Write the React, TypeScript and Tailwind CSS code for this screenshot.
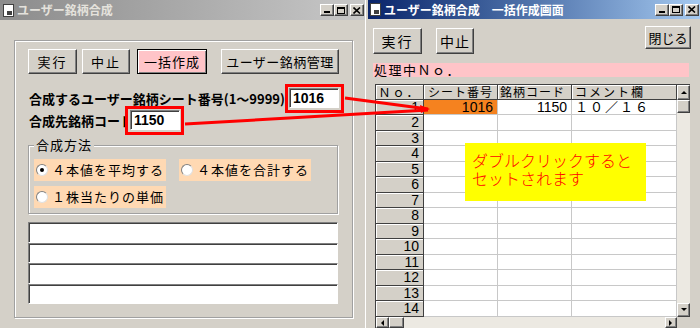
import clsx from 'clsx';
import type { ReactNode } from 'react';

const raised =
    'bg-[#d4d0c8] border border-t-white border-l-white border-r-[#404040] border-b-[#404040] shadow-[inset_-1px_-1px_0_#808080]';
const sunken =
    'bg-white border border-t-[#808080] border-l-[#808080] border-r-white border-b-white shadow-[inset_1px_1px_0_#404040]';

const Btn = ({ children, className }: { children: ReactNode; className?: string }) => (
    <div className={clsx('flex items-center justify-center text-[13px] leading-none whitespace-nowrap', raised, className)}>{children}</div>
);

const WinIcon = () => (
    <div className="w-[11px] h-[13px] bg-white border border-[#404040] relative">
        <div className="absolute bottom-[1px] right-[1px] w-[5px] h-[4px] bg-[#404040]" />
    </div>
);

const TitleButtons = () => (
    <div className="flex items-center ml-auto mr-[1px]">
        <div className={clsx('w-[14px] h-[12px] flex items-end justify-center pb-[2px]', raised)}>
            <div className="w-[6px] h-[2px] bg-black" />
        </div>
        <div className={clsx('w-[14px] h-[12px] flex items-center justify-center', raised)}>
            <div className="w-[8px] h-[7px] border border-black border-t-2" />
        </div>
        <div className={clsx('w-[14px] h-[12px] ml-[2px] flex items-center justify-center', raised)}>
            <svg width="8" height="7" viewBox="0 0 8 7">
                <path d="M0.5 0.5 L7 6.5 M7 0.5 L0.5 6.5" stroke="black" strokeWidth="1.6" />
            </svg>
        </div>
    </div>
);

const Radio = ({ checked, label }: { checked?: boolean; label: string }) => (
    <div className="bg-[#ffd9b3] h-[22px] flex items-center pl-[2px]">
        <div className="w-[12px] h-[12px] rounded-full bg-white border border-t-[#808080] border-l-[#808080] border-r-[#e0e0e0] border-b-[#e0e0e0] flex items-center justify-center">
            {checked && <div className="w-[4px] h-[4px] rounded-full bg-black" />}
        </div>
        <span className="ml-[4px] text-[13px] tracking-[1px] whitespace-nowrap">{label}</span>
    </div>
);

const Arrow = ({ dir }: { dir: 'up' | 'down' | 'left' | 'right' }) => {
    const d = {
        up: 'M1 5 L4 2 L7 5 Z',
        down: 'M1 2 L4 5 L7 2 Z',
        left: 'M5 1 L2 4 L5 7 Z',
        right: 'M2 1 L5 4 L2 7 Z',
    }[dir];
    return (
        <svg width="8" height="8" viewBox="0 0 8 8">
            <path d={d} fill="black" />
        </svg>
    );
};

const rows = Array.from({ length: 14 }, (_, i) => i + 1);
const numFont = "font-['Liberation_Sans_Narrow','Liberation_Sans',sans-serif]";
const headCell = 'bg-[#d4d0c8] border-r border-b border-[#404040] shadow-[inset_1px_1px_0_#fff] whitespace-nowrap';

const App = () => {
    return (
        <div className="w-[700px] h-[328px] overflow-hidden relative bg-[#d4d0c8] flex font-['Noto_Sans_CJK_JP',sans-serif] text-black">
            {/* left window */}
            <div className="w-[365px] h-full flex flex-col">
                <div className="h-[20px] flex items-center pl-[3px] bg-linear-to-r from-[#8c8c8c] to-[#c8c8c8]">
                    <WinIcon />
                    <span className="ml-[3px] text-[12px] font-bold text-[#e4e2dc] leading-none">ユーザー銘柄合成</span>
                    <TitleButtons />
                </div>
                <div className="pl-[14px] pt-[20px]">
                    <div className="w-[339px] h-[278px] border border-[#a0a0a0] shadow-[1px_1px_0_#fff,inset_1px_1px_0_#fff] pl-[13px] pt-[8px]">
                        <div className="flex h-[25px]">
                            <Btn className="w-[49px] tracking-[2px]">実行</Btn>
                            <Btn className="w-[48px] ml-[5px] tracking-[2px]">中止</Btn>
                            <div className="w-[70px] ml-[7px] flex items-center justify-center text-[13px] tracking-[1px] bg-[#ffc4c8] border border-black shadow-[inset_1px_1px_0_#fff,inset_-1px_-1px_0_#808080]">
                                一括作成
                            </div>
                            <Btn className="w-[118px] ml-[14px] tracking-[0.5px]">ユーザー銘柄管理</Btn>
                        </div>

                        <div className="flex mt-[10px] relative z-[1]">
                            <div className="w-[257px] h-[29px] leading-[29px] pl-[1px] text-[13px] font-bold whitespace-nowrap">
                                合成するユーザー銘柄シート番号(1～9999)
                            </div>
                            <div className="relative w-[59px] h-[29px] border-[3px] border-[#ff0000] p-[1px]">
                                <div className={clsx('w-[50px] h-[20px] pl-[3px] text-[14px] font-bold leading-[18px]', numFont, sunken)}>1016</div>
                            </div>
                        </div>

                        <div className="flex -mt-[7px] relative">
                            <div className="w-[97px] h-[29px] leading-[29px] pl-[1px] text-[13px] font-bold whitespace-nowrap">
                                合成先銘柄コード
                            </div>
                            <div className="relative w-[59px] h-[29px] border-[3px] border-[#ff0000] bg-[#d4d0c8] p-[1px] pl-[2px]">
                                <div className={clsx('w-[50px] h-[20px] pl-[3px] text-[14px] font-bold leading-[18px]', numFont, sunken)}>1150</div>
                            </div>
                        </div>

                        <div className="mt-[10px] w-[310px] h-[69px] relative border border-[#a0a0a0] shadow-[1px_1px_0_#fff,inset_1px_1px_0_#fff] pl-[5px] pt-[13px]">
                            <span className="absolute -top-[9px] left-[5px] bg-[#d4d0c8] px-[2px] text-[13px] tracking-[1px] leading-[16px]">
                                合成方法
                            </span>
                            <div className="grid grid-cols-[132px_132px] gap-x-[13px] gap-y-[5px]">
                                <Radio checked label="４本値を平均する" />
                                <Radio label="４本値を合計する" />
                                <Radio label="１株当たりの単価" />
                            </div>
                        </div>

                        <div className="mt-[8px] w-[310px] flex flex-col">
                            <div className={clsx('h-[21px]', sunken)} />
                            <div className={clsx('h-[20px]', sunken)} />
                            <div className={clsx('h-[21px]', sunken)} />
                            <div className={clsx('h-[20px]', sunken)} />
                        </div>
                    </div>
                </div>
            </div>

            {/* right window */}
            <div className="w-[335px] h-full flex flex-col border-l border-white">
                <div className="ml-[2px] h-[20px] flex items-center pl-[2px] bg-linear-to-r from-[#0a246a] to-[#a6caf0]">
                    <WinIcon />
                    <span className="ml-[3px] text-[12px] font-bold text-white leading-none whitespace-pre">ユーザー銘柄合成　一括作成画面</span>
                    <TitleButtons />
                </div>

                <div className="flex items-start">
                    <Btn className="w-[49px] h-[26px] mt-[9px] ml-[7px] text-[14px] tracking-[2px]">実行</Btn>
                    <Btn className="w-[38px] h-[26px] mt-[9px] ml-[14px] text-[14px] tracking-[1px]">中止</Btn>
                    <Btn className="w-[46px] h-[23px] mt-[7px] ml-auto mr-[9px] text-[13px]">閉じる</Btn>
                </div>

                <div className="ml-[7px] mt-[9px] w-[316px] h-[14px] bg-[#ffc4c8] text-[13px] leading-[14px] tracking-[1.5px] pl-[1px] whitespace-nowrap">
                    処理中Ｎｏ．
                </div>

                <div className="ml-[9px] mt-[7px] w-[315px] border-l border-t border-[#404040]">
                    <div className="flex">
                        <div className="w-[301px] flex flex-col">
                            <div className="flex h-[15px] text-[12px] leading-[14px]">
                                <div className={clsx('w-[48px] text-center tracking-[2px]', headCell)}>Ｎｏ．</div>
                                <div className={clsx('w-[74px] pl-[4px] tracking-[1px]', headCell)}>シート番号</div>
                                <div className={clsx('w-[74px] pl-[2px] tracking-[1px]', headCell)}>銘柄コード</div>
                                <div className={clsx('w-[105px] pl-[3px] tracking-[2px]', headCell)}>コメント欄</div>
                            </div>
                            {rows.map((n, i) => (
                                <div key={n} className={clsx('flex', i % 2 ? 'h-[16px]' : 'h-[15px]')}>
                                    <div className={clsx('w-[48px] bg-[#d4d0c8] border-r border-b border-[#404040] shadow-[inset_1px_1px_0_#fff] text-right pr-[4px] text-[14px] leading-[15px]', numFont)}>
                                        {n}
                                    </div>
                                    <div className={clsx('w-[74px] border-r border-b border-[#c8c8c8] text-right pr-[4px] text-[14px] leading-[14px]', numFont, n === 1 ? 'bg-[#f5821f]' : 'bg-white')}>
                                        {n === 1 ? '1016' : ''}
                                    </div>
                                    <div className={clsx('w-[74px] bg-white border-r border-b border-[#c8c8c8] text-right pr-[4px] text-[14px] leading-[14px]', numFont)}>
                                        {n === 1 ? '1150' : ''}
                                    </div>
                                    <div className="w-[105px] bg-white border-r border-b border-[#c8c8c8] pl-[3px] text-[13px] leading-[14px] tracking-[2px] whitespace-nowrap">
                                        {n === 1 ? '１０／１６' : ''}
                                    </div>
                                </div>
                            ))}
                        </div>
                        <div className="w-[13px] flex flex-col bg-[#ece9e2]">
                            <div className={clsx('h-[15px] flex items-center justify-center', raised)}><Arrow dir="up" /></div>
                            <div className={clsx('h-[13px]', raised)} />
                            <div className="flex-1" />
                            <div className={clsx('h-[14px] flex items-center justify-center', raised)}><Arrow dir="down" /></div>
                        </div>
                    </div>
                    <div className="flex h-[11px] bg-[#ece9e2]">
                        <div className={clsx('w-[13px] flex items-center justify-center', raised)}><Arrow dir="left" /></div>
                        <div className={clsx('w-[15px]', raised)} />
                        <div className="flex-1" />
                        <div className={clsx('w-[12px] flex items-center justify-center', raised)}><Arrow dir="right" /></div>
                        <div className="w-[13px] bg-[#d4d0c8]" />
                    </div>
                </div>
            </div>

            {/* callout */}
            <div className="absolute left-[465px] top-[143px] w-[181px] h-[58px] bg-[#ffff00] pl-[7px] pt-[8px] text-[16px] leading-[18px] text-[#ff0000] font-light">
                <div>ダブルクリックすると</div>
                <div>セットされます</div>
            </div>

            <svg className="absolute inset-0 pointer-events-none" width="700" height="328" viewBox="0 0 700 328">
                <path d="M345 98 L428 109" stroke="#ff0000" strokeWidth="3" />
                <path d="M185 124 L428 110" stroke="#ff0000" strokeWidth="3" />
                <path d="M420 105 L430 109 L421 113 Z" fill="#ff0000" />
            </svg>
        </div>
    );
};

export default App;
